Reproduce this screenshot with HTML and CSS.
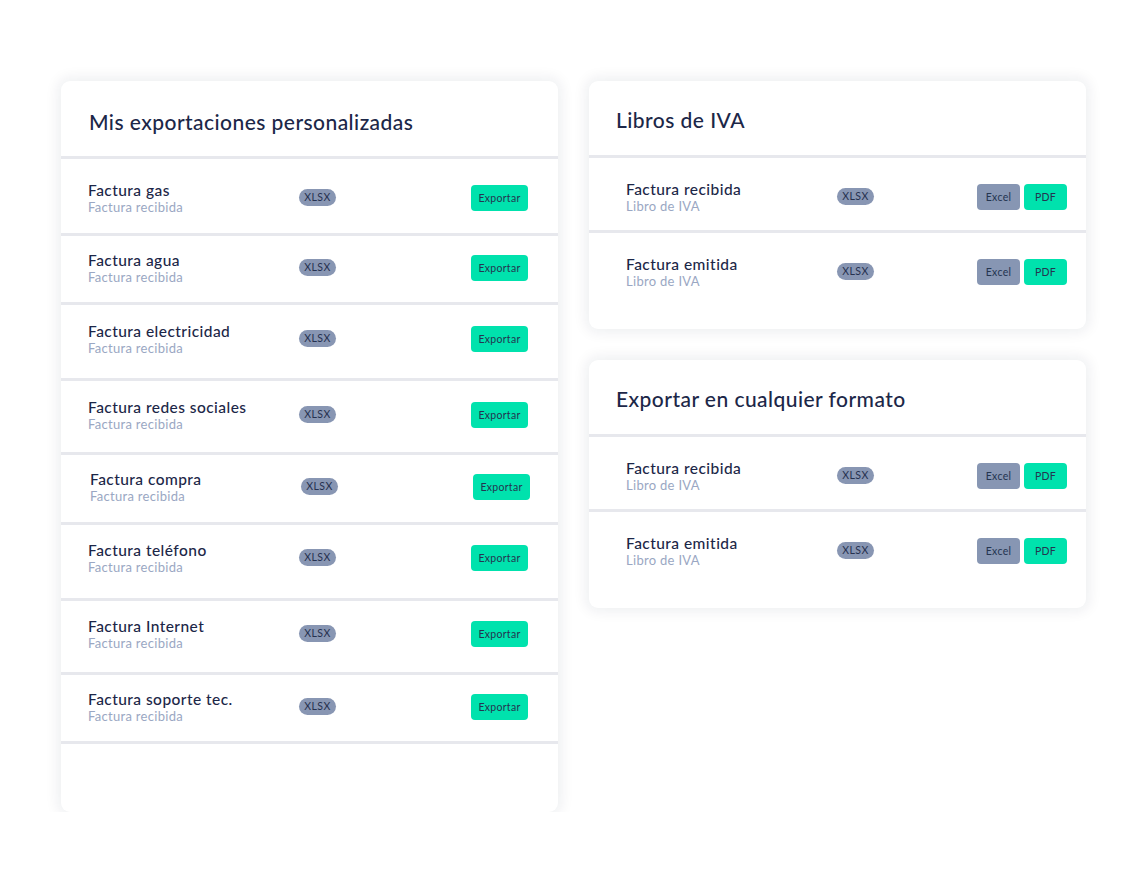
FILE: index.html
```html
<!DOCTYPE html>
<html lang="es">
<head>
<meta charset="utf-8">
<title>Exportaciones</title>
<link rel="stylesheet" href="styles.css">
</head>
<body>
<main class="page">
  <section class="card card-left">
    <header class="card-head head-left"><h2 class="card-title">Mis exportaciones personalizadas</h2></header>
    <div class="row row-l p21 h77">
      <div class="info"><div class="name">Factura gas</div><div class="sub">Factura recibida</div></div>
      <span class="badge">XLSX</span>
      <div class="actions"><span class="btn btn-green btn-export">Exportar</span></div>
    </div>
    <div class="row row-l h69">
      <div class="info"><div class="name">Factura agua</div><div class="sub">Factura recibida</div></div>
      <span class="badge">XLSX</span>
      <div class="actions"><span class="btn btn-green btn-export">Exportar</span></div>
    </div>
    <div class="row row-l p16 h76">
      <div class="info"><div class="name">Factura electricidad</div><div class="sub">Factura recibida</div></div>
      <span class="badge">XLSX</span>
      <div class="actions"><span class="btn btn-green btn-export">Exportar</span></div>
    </div>
    <div class="row row-l p16 h74">
      <div class="info"><div class="name">Factura redes sociales</div><div class="sub">Factura recibida</div></div>
      <span class="badge">XLSX</span>
      <div class="actions"><span class="btn btn-green btn-export">Exportar</span></div>
    </div>
    <div class="row row-l shift h70">
      <div class="info"><div class="name">Factura compra</div><div class="sub">Factura recibida</div></div>
      <span class="badge">XLSX</span>
      <div class="actions"><span class="btn btn-green btn-export">Exportar</span></div>
    </div>
    <div class="row row-l p15 h76">
      <div class="info"><div class="name">Factura teléfono</div><div class="sub">Factura recibida</div></div>
      <span class="badge">XLSX</span>
      <div class="actions"><span class="btn btn-green btn-export">Exportar</span></div>
    </div>
    <div class="row row-l p15 h74">
      <div class="info"><div class="name">Factura Internet</div><div class="sub">Factura recibida</div></div>
      <span class="badge">XLSX</span>
      <div class="actions"><span class="btn btn-green btn-export">Exportar</span></div>
    </div>
    <div class="row row-l h69">
      <div class="info"><div class="name">Factura soporte tec.</div><div class="sub">Factura recibida</div></div>
      <span class="badge">XLSX</span>
      <div class="actions"><span class="btn btn-green btn-export">Exportar</span></div>
    </div>
  </section>

  <div class="col-right">
    <section class="card card-right">
      <header class="card-head head-right"><h2 class="card-title">Libros de IVA</h2></header>
      <div class="row row-r p21 h75">
        <div class="info"><div class="name">Factura recibida</div><div class="sub">Libro de IVA</div></div>
        <span class="badge">XLSX</span>
        <div class="actions"><span class="btn btn-gray">Excel</span><span class="btn btn-green">PDF</span></div>
      </div>
      <div class="row row-r p21 last">
        <div class="info"><div class="name">Factura emitida</div><div class="sub">Libro de IVA</div></div>
        <span class="badge">XLSX</span>
        <div class="actions"><span class="btn btn-gray">Excel</span><span class="btn btn-green">PDF</span></div>
      </div>
    </section>

    <section class="card card-right">
      <header class="card-head head-right"><h2 class="card-title">Exportar en cualquier formato</h2></header>
      <div class="row row-r p21 h75">
        <div class="info"><div class="name">Factura recibida</div><div class="sub">Libro de IVA</div></div>
        <span class="badge">XLSX</span>
        <div class="actions"><span class="btn btn-gray">Excel</span><span class="btn btn-green">PDF</span></div>
      </div>
      <div class="row row-r p21 last">
        <div class="info"><div class="name">Factura emitida</div><div class="sub">Libro de IVA</div></div>
        <span class="badge">XLSX</span>
        <div class="actions"><span class="btn btn-gray">Excel</span><span class="btn btn-green">PDF</span></div>
      </div>
    </section>
  </div>
</main>
</body>
</html>
```

FILE: styles.css
```css
* { box-sizing: border-box; }

html, body {
  margin: 0;
  padding: 0;
  background: #ffffff;
}

body {
  font-family: Lato, "Open Sans", "Liberation Sans", sans-serif;
  color: #1c2748;
}

.page {
  display: flex;
  align-items: flex-start;
  gap: 31px;
  padding: 81px 0 0 61px;
}

.card {
  width: 497px;
  background: #ffffff;
  border-radius: 9px;
  box-shadow: 0 0 13px 4px rgba(20, 30, 60, 0.065);
  overflow: hidden;
}

.card-left {
  height: 731px;
}

.card-right {
  height: 248px;
}

.col-right {
  display: flex;
  flex-direction: column;
  gap: 31px;
}

.card-head {
  display: flex;
  align-items: center;
  border-bottom: 3px solid #e7e8ed;
}

.head-left {
  height: 78px;
  padding: 6px 0 0 28px;
}

.head-right {
  height: 77px;
  padding: 3px 0 0 27px;
}

.card-title {
  margin: 0;
  font-size: 21px;
  font-weight: 500;
  color: #1c2748;
  letter-spacing: 0.45px;
}

.row {
  display: grid;
  grid-template-rows: 36px;
  align-content: start;
  align-items: center;
  border-bottom: 3px solid #e7e8ed;
  padding-top: 14px;
}

.row-l {
  grid-template-columns: 211px 37px 1fr;
  padding-left: 27px;
  padding-right: 30px;
}

.row-l.shift {
  padding-left: 29px;
  padding-right: 28px;
}

.row-r {
  grid-template-columns: 211px 37px 1fr;
  padding-left: 37px;
  padding-right: 19px;
}

.row.last {
  border-bottom: none;
}

.p21 { padding-top: 21px; }
.p16 { padding-top: 16px; }
.p15 { padding-top: 15px; }

.h69 { height: 69px; }
.h70 { height: 70px; }
.h74 { height: 74px; }
.h75 { height: 75px; }
.h76 { height: 76px; }
.h77 { height: 77px; }

.info {
  display: flex;
  flex-direction: column;
}

.name {
  font-size: 15.5px;
  line-height: 18px;
  font-weight: 500;
  color: #1c2748;
  letter-spacing: 0.45px;
  white-space: nowrap;
}

.sub {
  font-size: 13px;
  line-height: 17px;
  font-weight: 400;
  color: #9aa7c3;
  letter-spacing: 0.3px;
  white-space: nowrap;
}

.badge {
  display: flex;
  align-items: center;
  justify-content: center;
  width: 37px;
  height: 17px;
  border-radius: 9px;
  background: #8896b3;
  color: #26314f;
  font-size: 10.5px;
  letter-spacing: 0.5px;
  margin-top: -2px;
}

.actions {
  display: flex;
  justify-content: flex-end;
  gap: 4px;
}

.btn {
  display: flex;
  align-items: center;
  justify-content: center;
  height: 26px;
  width: 43px;
  border-radius: 4px;
  font-size: 10.5px;
  letter-spacing: 0.3px;
  color: #243550;
}

.btn-export {
  width: 57px;
}

.btn-green {
  background: #00e2ad;
}

.btn-gray {
  background: #8796b3;
}
```
